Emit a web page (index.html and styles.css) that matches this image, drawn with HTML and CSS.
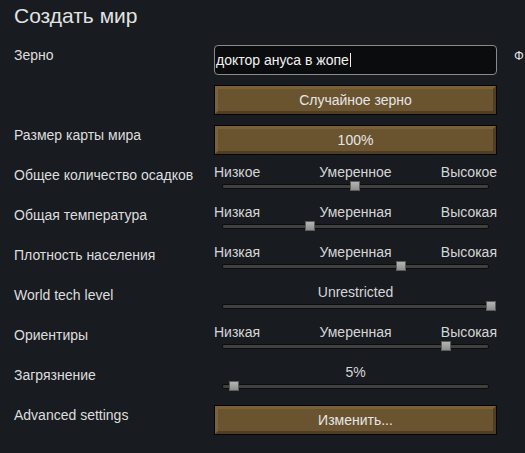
FILE: index.html
```html
<!DOCTYPE html>
<html lang="ru">
<head>
<meta charset="utf-8">
<title>Создать мир</title>
<link rel="stylesheet" href="styles.css">
</head>
<body>
<div class="page">
  <h1 class="title">Создать мир</h1>
  <div class="columns">
    <div class="form">
      <div class="row row-seed">
        <div class="label">Зерно</div>
        <div class="control">
          <div class="input"><span class="input-text">доктор ануса в жопе</span><span class="caret"></span></div>
          <button class="btn btn-under">Случайное зерно</button>
        </div>
      </div>
      <div class="row">
        <div class="label">Размер карты мира</div>
        <div class="control"><button class="btn">100%</button></div>
      </div>
      <div class="row">
        <div class="label">Общее количество осадков</div>
        <div class="control">
          <div class="ticks"><span class="t-lo">Низкое</span><span class="t-mid">Умеренное</span><span class="t-hi">Высокое</span></div>
          <div class="rail"><div class="handle" style="left:47.9%"></div></div>
        </div>
      </div>
      <div class="row">
        <div class="label">Общая температура</div>
        <div class="control">
          <div class="ticks"><span class="t-lo">Низкая</span><span class="t-mid">Умеренная</span><span class="t-hi">Высокая</span></div>
          <div class="rail"><div class="handle" style="left:31.1%"></div></div>
        </div>
      </div>
      <div class="row">
        <div class="label">Плотность населения</div>
        <div class="control">
          <div class="ticks"><span class="t-lo">Низкая</span><span class="t-mid">Умеренная</span><span class="t-hi">Высокая</span></div>
          <div class="rail"><div class="handle" style="left:65.2%"></div></div>
        </div>
      </div>
      <div class="row">
        <div class="label">World tech level</div>
        <div class="control">
          <div class="ticks"><span class="t-mid">Unrestricted</span></div>
          <div class="rail"><div class="handle" style="left:98.9%"></div></div>
        </div>
      </div>
      <div class="row">
        <div class="label">Ориентиры</div>
        <div class="control">
          <div class="ticks"><span class="t-lo">Низкая</span><span class="t-mid">Умеренная</span><span class="t-hi">Высокая</span></div>
          <div class="rail"><div class="handle" style="left:82%"></div></div>
        </div>
      </div>
      <div class="row">
        <div class="label">Загрязнение</div>
        <div class="control">
          <div class="ticks"><span class="t-mid">5%</span></div>
          <div class="rail"><div class="handle" style="left:2.6%"></div></div>
        </div>
      </div>
      <div class="row">
        <div class="label">Advanced settings</div>
        <div class="control"><button class="btn">Изменить...</button></div>
      </div>
    </div>
    <div class="side">
      <div class="label side-label">Ф</div>
    </div>
  </div>
</div>
</body>
</html>
```

FILE: styles.css
```css
html, body {
  margin: 0;
  padding: 0;
  background: #181b20;
  overflow: hidden;
}
body {
  width: 525px;
  height: 453px;
  font-family: "Liberation Sans", Arial, sans-serif;
  color: #dcdcdc;
}
.page {
  padding-left: 14px;
}
.title {
  margin: 0;
  padding-top: 4px;
  font-size: 21px;
  line-height: 24px;
  font-weight: normal;
  color: #e2e2e2;
}
.columns {
  display: flex;
  margin-top: 17px;
  gap: 17px;
}
.form {
  display: flex;
  flex-direction: column;
  flex: 0 0 483px;
}
.row {
  display: grid;
  grid-template-columns: 200px 283px;
  height: 40px;
}
.row-seed {
  height: 80px;
}
.label {
  padding-top: 2px;
  font-size: 14px;
  line-height: 16px;
  color: #dedede;
  white-space: nowrap;
}
.control {
  display: flex;
  flex-direction: column;
}
.input {
  box-sizing: border-box;
  height: 30px;
  border: 1px solid #8a8a8a;
  border-radius: 4px;
  background: #0b0c0e;
  display: flex;
  align-items: center;
  padding-left: 1px;
  font-size: 14px;
  color: #f2f2f2;
}
.caret {
  width: 1px;
  height: 14px;
  background: #f2f2f2;
  margin-left: 1px;
}
.btn {
  box-sizing: border-box;
  margin: 1px 1px 0 1px;
  height: 28px;
  padding: 0;
  border: 3px solid;
  border-color: #7a6139 #4f3e23 #4f3e23 #7a6139;
  outline: 1px solid #050505;
  background: #6a5430;
  font-family: "Liberation Sans", Arial, sans-serif;
  font-size: 14px;
  color: #e6e6e6;
  text-align: center;
}
.btn-under {
  margin-top: 11px;
}
.ticks {
  display: grid;
  grid-template-columns: 1fr auto 1fr;
  font-size: 14px;
  line-height: 14px;
  color: #d6d6d6;
  white-space: nowrap;
}
.t-lo {
  grid-column: 1;
  justify-self: start;
}
.t-mid {
  grid-column: 2;
}
.t-hi {
  grid-column: 3;
  justify-self: end;
}
.rail {
  position: relative;
  height: 10px;
  margin: 2px 8px 0 8px;
}
.rail::before {
  content: "";
  position: absolute;
  left: 0;
  right: 0;
  top: 3px;
  height: 5px;
  box-sizing: border-box;
  border: 1px solid #0c0c0c;
  border-radius: 2px;
  background: #404040;
}
.handle {
  position: absolute;
  top: 0;
  width: 10px;
  height: 10px;
  box-sizing: border-box;
  border: 1px solid #5c5c5c;
  background: linear-gradient(#b4b4b4, #8e8e8e);
}
.side {
  white-space: nowrap;
}
.side-label {
  padding-top: 3px;
  font-size: 13px;
}
```
